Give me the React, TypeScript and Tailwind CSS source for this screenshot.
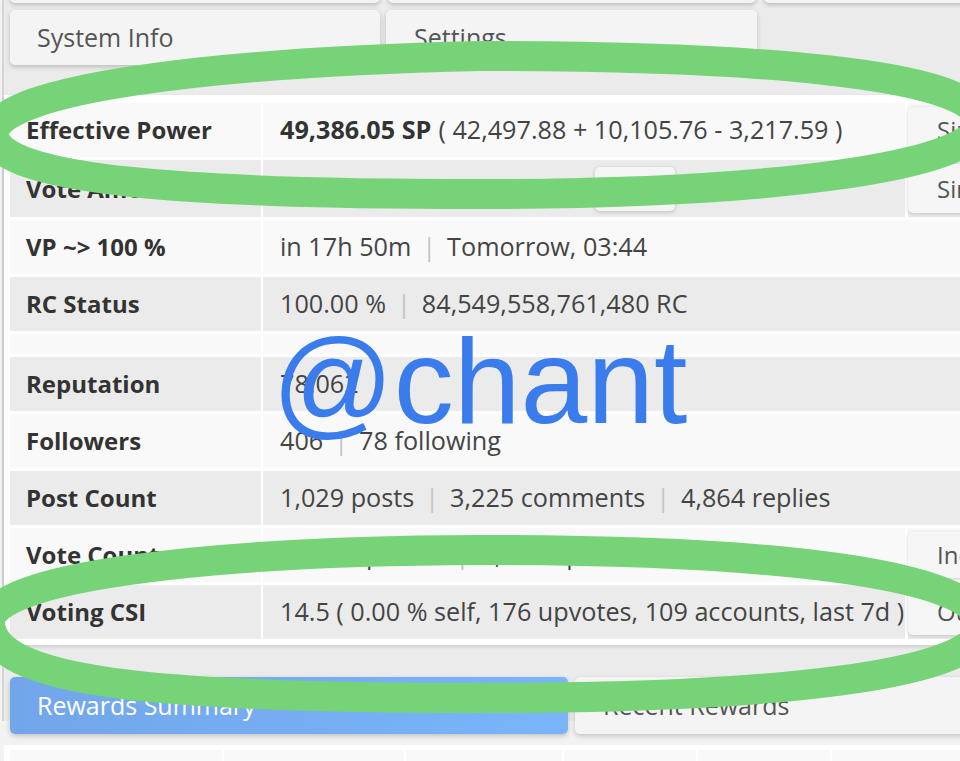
const light = "bg-[#f9f9f9]";
const dark = "bg-[#ebebeb]";

function Sep() {
  return <span className="mx-[11px] text-[#c4c4c4]">|</span>;
}

function Row({
  label,
  bg,
  tall,
  children,
  side,
}: {
  label: string;
  bg: string;
  tall?: boolean;
  children?: React.ReactNode;
  side?: string;
}) {
  return (
    <div className={`flex gap-[2px] ${tall ? "h-[57px]" : "h-[54px]"}`}>
      <div className={`flex w-[251px] shrink-0 items-center pl-[16px] text-[24px] font-bold text-[#333] ${bg}`}>
        {label}
      </div>
      <div className={`flex flex-1 items-center whitespace-nowrap pl-[17px] text-[25.2px] text-[#444] ${bg}`}>
        {children}
      </div>
      {side && (
        <div className={`ml-[1px] flex w-[196px] shrink-0 py-[4px] ${bg}`}>
          <div className="flex flex-1 items-center rounded-[5px] bg-[#f5f5f5] pl-[29px] text-[24px] text-[#555] shadow-[0_1px_4px_rgba(0,0,0,0.18)]">
            {side}
          </div>
        </div>
      )}
    </div>
  );
}

export default function App() {
  return (
    <div className="relative h-[761px] w-[960px] overflow-hidden bg-[#f2f2f2] font-['Open_Sans',sans-serif]">
      <div className="ml-[2px] h-full border-l-2 border-[#d6d6d6] bg-[#ebebeb]">
        {/* previous buttons, cut off at the top */}
        <div className="-mt-[40px] ml-[6px] grid grid-cols-[370px_368px_370px] gap-[8px]">
          <div className="h-[43px] rounded-[5px] bg-[#f4f4f4] shadow-[0_2px_4px_rgba(0,0,0,0.2)]" />
          <div className="h-[43px] rounded-[5px] bg-[#f4f4f4] shadow-[0_2px_4px_rgba(0,0,0,0.2)]" />
          <div className="h-[43px] rounded-[5px] bg-[#f4f4f4] shadow-[0_2px_4px_rgba(0,0,0,0.2)]" />
        </div>

        {/* tabs */}
        <div className="ml-[6px] mt-[7px] grid grid-cols-[370px_371px] gap-[6px]">
          <div className="flex h-[55px] items-center rounded-[5px] bg-[#f4f4f4] pl-[27px] text-[25px] text-[#555] shadow-[0_2px_5px_rgba(0,0,0,0.2)]">
            System Info
          </div>
          <div className="flex h-[55px] items-center rounded-[5px] bg-[#f4f4f4] pl-[28px] text-[25px] text-[#555] shadow-[0_2px_5px_rgba(0,0,0,0.2)]">
            Settings
          </div>
        </div>

        {/* account table */}
        <div className="mt-[30px] w-[1100px] bg-white pb-[6px] pl-[6px] pt-[8px] shadow-[0_2px_4px_rgba(0,0,0,0.12)]">
          <div className="flex flex-col gap-[3px]">
            <Row label="Effective Power" bg={light} side="Simulate">
              <span className="font-bold text-[#333]">49,386.05 SP</span>
              <span className="ml-[7px]">( 42,497.88 + 10,105.76 - 3,217.59 )</span>
            </Row>
            <Row label="Vote Amount" bg={dark} tall side="Simulate">
              <div className="ml-[315px] flex h-[44px] w-[80px] items-center justify-center rounded-[5px] bg-[#f5f5f5] text-[20px] shadow-[0_1px_4px_rgba(0,0,0,0.18)]">
                100 %
              </div>
            </Row>
            <Row label="VP ~> 100 %" bg={light}>
              in 17h 50m
              <Sep />
              Tomorrow, 03:44
            </Row>
            <Row label="RC Status" bg={dark}>
              100.00 %
              <Sep />
              84,549,558,761,480 RC
            </Row>
            <div className="flex h-[20px] gap-[2px]">
              <div className={`w-[251px] shrink-0 ${light}`} />
              <div className={`flex-1 ${light}`} />
            </div>
            <Row label="Reputation" bg={dark}>
              78.062
            </Row>
            <Row label="Followers" bg={light}>
              406
              <Sep />
              78 following
            </Row>
            <Row label="Post Count" bg={dark}>
              1,029 posts
              <Sep />
              3,225 comments
              <Sep />
              4,864 replies
            </Row>
            <Row label="Vote Count" bg={light} side="Incoming">
              3,540 upvotes
              <Sep />
              1,158 upvotes, last 7d
            </Row>
            <Row label="Voting CSI" bg={dark} side="Outgoing">
              14.5 ( 0.00 % self, 176 upvotes, 109 accounts, last 7d )
            </Row>
          </div>
        </div>

        {/* rewards tabs */}
        <div className="ml-[6px] mt-[32px] grid grid-cols-[558px_558px] gap-[7px]">
          <div className="flex h-[57px] items-center rounded-[5px] bg-gradient-to-r from-[#72a6ea] to-[#7ab4fa] pl-[27px] text-[25px] text-white shadow-[0_2px_5px_rgba(0,0,0,0.2)]">
            Rewards Summary
          </div>
          <div className="flex h-[57px] items-center rounded-[5px] bg-[#f4f4f4] pl-[28px] text-[25px] text-[#555] shadow-[0_2px_5px_rgba(0,0,0,0.2)]">
            Recent Rewards
          </div>
        </div>

        {/* rewards table, cut off at the bottom */}
        <div className="mt-[11px] bg-white pl-[6px] pt-[5px]">
          <div className="grid grid-cols-[212px_180px_156px_132px_132px_200px] gap-[2px]">
            <div className="h-[40px] bg-[#f9f9f9]" />
            <div className="h-[40px] bg-[#f9f9f9]" />
            <div className="h-[40px] bg-[#f9f9f9]" />
            <div className="h-[40px] bg-[#f9f9f9]" />
            <div className="h-[40px] bg-[#f9f9f9]" />
            <div className="h-[40px] bg-[#f9f9f9]" />
          </div>
        </div>
      </div>

      {/* annotation overlay */}
      <svg className="pointer-events-none absolute left-0 top-0" width="960" height="761" viewBox="0 0 960 761">
        <path
          d="M-6 134 C-6 88 220 62 480 56 C740 56 980 72 980 122 C980 168 760 194 480 194 C200 194 -6 182 -6 134 Z"
          fill="none"
          stroke="#77d377"
          strokeWidth="30"
        />
        <path
          d="M-10 622 C-10 578 200 551 480 550 C760 550 982 572 982 625 C982 676 770 698 480 698 C150 698 -10 682 -10 622 Z"
          fill="none"
          stroke="#77d377"
          strokeWidth="30"
        />
      </svg>
      <div className="pointer-events-none absolute left-[272px] top-[321px] font-['Liberation_Sans',Arial,sans-serif] text-[120px] leading-none text-[#3a7cec]">
        @chant
      </div>
    </div>
  );
}
